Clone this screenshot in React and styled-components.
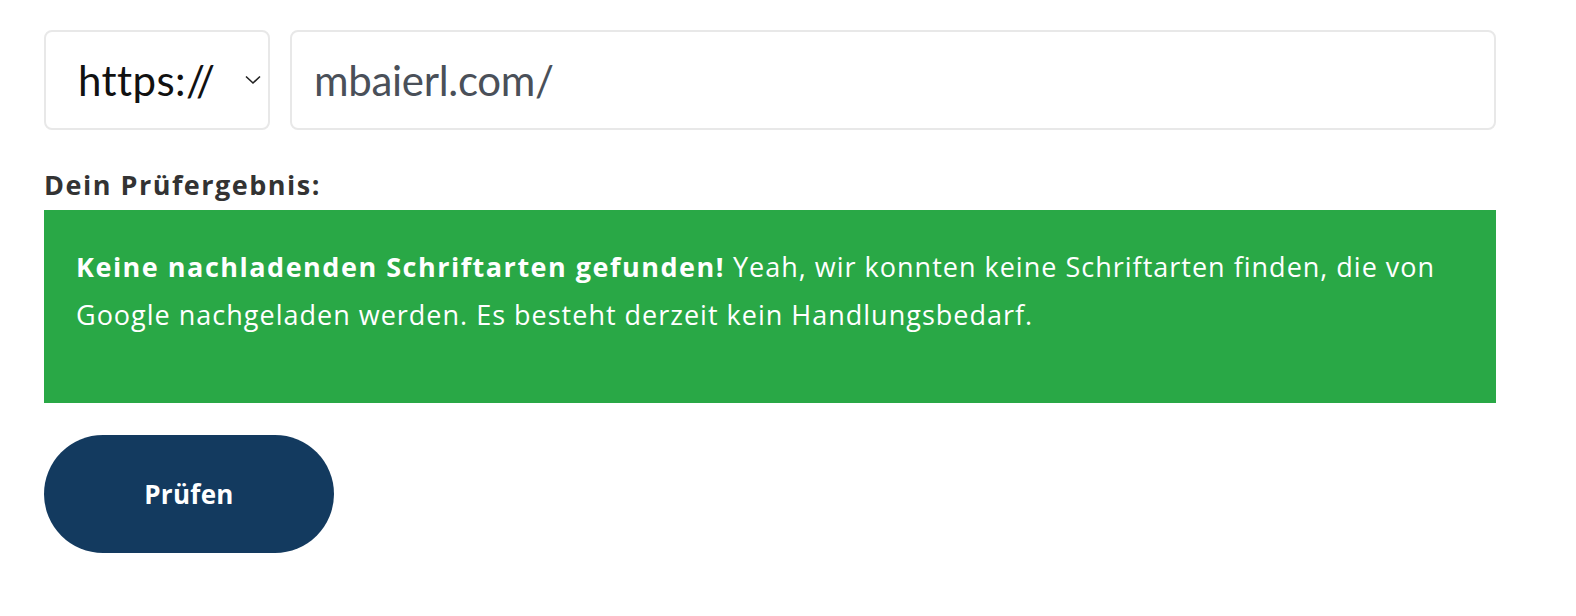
import React from "react";
import styled, { createGlobalStyle } from "styled-components";

const Global = createGlobalStyle`
  html, body { margin: 0; padding: 0; background: #ffffff; }
  body { font-family: "Open Sans", "Noto Sans", sans-serif; }
`;

const Page = styled.div`
  padding: 30px 0 0 44px;
  width: 1452px;
`;

const UrlRow = styled.div`
  display: flex;
  gap: 20px;
`;

const Field = styled.div`
  box-sizing: border-box;
  height: 100px;
  border: 2px solid #e8e8e8;
  border-radius: 8px;
  display: flex;
  align-items: center;
  background: #fff;
  font-family: Lato, "Noto Sans", sans-serif;
  font-size: 42px;
`;

const Select = styled(Field)`
  width: 226px;
  padding: 0 0 0 32px;
  color: #111;
  letter-spacing: 0.4px;
  justify-content: space-between;
`;

const Input = styled(Field)`
  flex: 1;
  padding-left: 22px;
  color: #4a5059;
  letter-spacing: -0.3px;
`;

const Chevron = styled.svg`
  width: 16px;
  height: 10px;
  margin-right: 7px;
`;

const Label = styled.div`
  margin-top: 40px;
  height: 40px;
  font-size: 27px;
  line-height: 30px;
  font-weight: 700;
  letter-spacing: 1.5px;
  color: #333;
`;

const Result = styled.div`
  background: #29a846;
  color: #fff;
  padding: 33px 32px 64px 32px;
  font-size: 27px;
  line-height: 48px;
  letter-spacing: 1px;
`;

const Strong = styled.strong`
  font-weight: 700;
  letter-spacing: 1.5px;
`;

const Button = styled.button`
  margin-top: 32px;
  width: 290px;
  height: 118px;
  border: none;
  border-radius: 59px;
  background: #133a5f;
  color: #fff;
  font-family: "Open Sans", "Noto Sans", sans-serif;
  font-size: 26px;
  font-weight: 700;
  letter-spacing: 0.3px;
  cursor: pointer;
`;

export default function App() {
  return (
    <>
      <Global />
      <Page>
        <UrlRow>
          <Select>
            <span>https://</span>
            <Chevron viewBox="0 0 16 10">
              <path d="M1 1.5 L8 8 L15 1.5" fill="none" stroke="#222" strokeWidth="1.6" />
            </Chevron>
          </Select>
          <Input>mbaierl.com/</Input>
        </UrlRow>
        <Label>Dein Prüfergebnis:</Label>
        <Result>
          <Strong>Keine nachladenden Schriftarten gefunden!</Strong> Yeah, wir konnten keine
          Schriftarten finden, die von Google nachgeladen werden. Es besteht derzeit kein
          Handlungsbedarf.
        </Result>
        <Button>Prüfen</Button>
      </Page>
    </>
  );
}
